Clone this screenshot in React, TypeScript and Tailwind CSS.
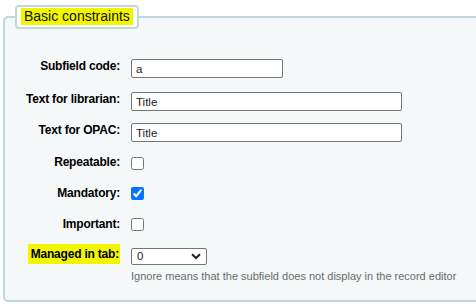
import React from "react";

const labelCls =
  "w-[115px] shrink-0 text-right font-bold text-[12px] tracking-[-0.2px] leading-[14px] text-black mr-[11px]";
const inputCls =
  "h-[19px] rounded-[2px] border border-[#767676] bg-white px-[4px] text-[11.5px] text-[#222] outline-none";

function Row({ label, children, className = "" }: { label: React.ReactNode; children: React.ReactNode; className?: string }) {
  return (
    <div className={`flex items-start ${className}`}>
      <div className={labelCls}>{label}</div>
      {children}
    </div>
  );
}

export default function App() {
  return (
    <div
      className="w-[476px] h-[307px] overflow-hidden bg-white pt-[5px] pl-[3px]"
      style={{ fontFamily: '"Liberation Sans", Arial, sans-serif' }}
    >
      <fieldset className="w-[520px] h-[297px] rounded-[5px] border-2 border-[#bcdadb] bg-[#f4f8f9]">
        <legend className="ml-[10px] rounded-[4px] border-2 border-[#bcdadb] bg-white px-[4px] pt-[1px] pb-[2px]">
          <span className="block bg-[#f2f700] px-[3px] text-[14px] leading-[17px] text-[#111]">
            Basic constraints
          </span>
        </legend>

        <div className="flex flex-col pt-[30px]">
          <Row label="Subfield code:">
            <input className={`${inputCls} w-[152px]`} defaultValue="a" />
          </Row>
          <Row label="Text for librarian:" className="mt-[14px]">
            <input className={`${inputCls} w-[271px]`} defaultValue="Title" />
          </Row>
          <Row label="Text for OPAC:" className="mt-[12px]">
            <input className={`${inputCls} w-[271px]`} defaultValue="Title" />
          </Row>
          <Row label="Repeatable:" className="mt-[13px] h-[19px]">
            <input type="checkbox" className="mt-[2px] h-[13px] w-[13px]" />
          </Row>
          <Row label="Mandatory:" className="mt-[12px] h-[19px]">
            <input type="checkbox" defaultChecked className="mt-[1px] h-[13px] w-[13px]" />
          </Row>
          <Row label="Important:" className="mt-[12px] h-[19px]">
            <input type="checkbox" className="mt-[1px] h-[13px] w-[13px]" />
          </Row>
          <Row
            label={
              <span className="bg-[#f2f700] py-[3px] pl-[3px] pr-[1px]">Managed in tab:</span>
            }
            className="mt-[11px]"
          >
            <div className="flex flex-col">
              <div className="mt-[1px] flex h-[17px] w-[76px] items-center justify-between rounded-[2px] border border-[#767676] bg-white pl-[5px] pr-[5px] text-[11.5px] text-[#222]">
                <span>0</span>
                <svg width="10" height="7" viewBox="0 0 10 7">
                  <path d="M1 1.2 L5 5 L9 1.2" fill="none" stroke="#222" strokeWidth="2" />
                </svg>
              </div>
              <div className="mt-[5px] text-[11px] leading-[13px] text-[#6b6b6b]">
                Ignore means that the subfield does not display in the record editor
              </div>
            </div>
          </Row>
        </div>
      </fieldset>
    </div>
  );
}
